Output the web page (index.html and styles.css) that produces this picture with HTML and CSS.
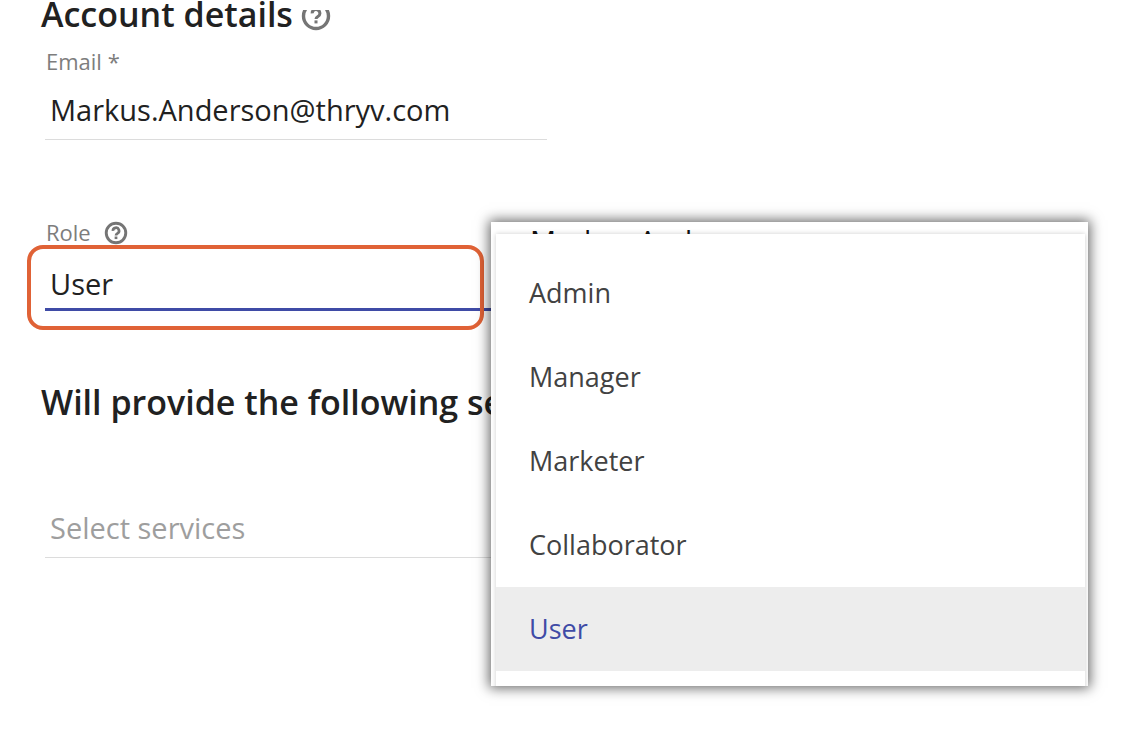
FILE: index.html
```html
<!DOCTYPE html>
<html lang="en">
<head>
    <meta charset="UTF-8">
    <meta name="viewport" content="width=device-width, initial-scale=1.0">
    <title>Account details</title>
    <link rel="stylesheet" href="styles.css">
</head>
<body>
    <main class="page">
        <form class="account-form">
            <h2 class="section-title">
                Account details
                <svg class="title-help" viewBox="0 9 30 21" aria-hidden="true">
                    <circle cx="15" cy="15" r="12.5" fill="none" stroke="currentColor" stroke-width="3.4" />
                    <path d="M11.2 12.4a3.8 3.8 0 1 1 5.7 3.1c-1.3.8-1.9 1.3-1.9 2.6" fill="none" stroke="currentColor" stroke-width="3" />
                    <rect x="13.5" y="19.4" width="3" height="3" fill="currentColor" />
                </svg>
            </h2>

            <div class="field">
                <label class="field-label" for="email">Email *</label>
                <input class="control" type="email" id="email" value="Markus.Anderson@thryv.com">
            </div>

            <div class="field field-role">
                <label class="field-label" for="role">
                    Role
                    <svg class="label-help" viewBox="0 0 30 30" aria-hidden="true">
                        <circle cx="15" cy="15" r="12.2" fill="none" stroke="currentColor" stroke-width="3.6" />
                        <path d="M11.2 12.4a3.8 3.8 0 1 1 5.7 3.1c-1.3.8-1.9 1.3-1.9 2.6" fill="none" stroke="currentColor" stroke-width="3.4" />
                        <rect x="13.3" y="19.4" width="3.4" height="3.2" fill="currentColor" />
                    </svg>
                </label>
                <select class="control" id="role">
                    <option>Admin</option>
                    <option>Manager</option>
                    <option>Marketer</option>
                    <option>Collaborator</option>
                    <option selected>User</option>
                </select>
                <div class="highlight"></div>
            </div>

            <h2 class="section-title section-services">Will provide the following services</h2>

            <select class="control control-empty" id="services" aria-label="Select services">
                <option>Select services</option>
            </select>
        </form>

        <!-- Open role list -->
        <div class="role-panel">
            <div class="panel-name">Markus Anderson</div>
            <div class="role-menu" role="listbox" aria-label="Role">
                <button type="button" class="role-option" role="option">Admin</button>
                <button type="button" class="role-option" role="option">Manager</button>
                <button type="button" class="role-option" role="option">Marketer</button>
                <button type="button" class="role-option" role="option">Collaborator</button>
                <button type="button" class="role-option selected" role="option" aria-selected="true">User</button>
            </div>
        </div>
    </main>
</body>
</html>
```

FILE: styles.css
```css
:root {
    --primary-color: #3f4ba6;
    --highlight-color: #e06236;
    --text-color: #212121;
    --label-color: #7d7d7d;
    --line-color: #dcdcdc;
}

* {
    box-sizing: border-box;
    margin: 0;
    padding: 0;
}

body {
    font-family: 'Open Sans', sans-serif;
    background: #fff;
    color: var(--text-color);
}

.page {
    position: relative;
    min-height: 100vh;
    padding: 0 45px;
}

.account-form {
    max-width: 502px;
}

.section-title {
    display: flex;
    align-items: flex-start;
    gap: 8px;
    height: 28px;
    margin-left: -4px;
    font-size: 34px;
    font-weight: 600;
    line-height: 28px;
    white-space: nowrap;
}

.section-services {
    margin-top: 77px;
    margin-bottom: 78px;
}

.title-help {
    width: 30px;
    height: 21px;
    margin-top: 10px;
    color: #757575;
}

.field {
    position: relative;
    margin-top: 18px;
}

.field-role {
    margin-top: 77px;
}

.field-label {
    display: flex;
    align-items: center;
    gap: 13px;
    padding-left: 1px;
    color: var(--label-color);
    font-size: 22px;
    line-height: 30px;
}

.label-help {
    width: 24px;
    height: 24px;
    margin-top: 2px;
    color: #757575;
}

.control {
    display: block;
    width: 100%;
    height: 64px;
    padding: 4px 5px 0;
    border: none;
    border-bottom: 1px solid var(--line-color);
    border-radius: 0;
    outline: none;
    appearance: none;
    background: transparent;
    color: var(--text-color);
    font-family: inherit;
    font-size: 29px;
}

.control-empty {
    color: #9e9e9e;
}

.field-role .control {
    padding-top: 12px;
    border-bottom: 3px solid var(--primary-color);
}

/* Marks the field to change */
.highlight {
    position: absolute;
    top: 28px;
    left: -18px;
    right: 63px;
    height: 85px;
    border: 4px solid var(--highlight-color);
    border-radius: 16px;
    pointer-events: none;
}

.role-panel {
    position: absolute;
    top: 222px;
    left: 491px;
    right: 52px;
    height: 464px;
    padding: 0 3px 0 5px;
    overflow: hidden;
    background: #fff;
    box-shadow: 0 0 12px 2px rgba(0, 0, 0, 0.6);
}

.panel-name {
    height: 12px;
    padding-left: 34px;
    color: #111;
    font-size: 29px;
    line-height: 38px;
}

.role-menu {
    position: relative;
    min-height: 100%;
    padding: 17px 0;
    background: #fff;
    box-shadow: 0 0 5px rgba(0, 0, 0, 0.2);
}

.role-option {
    display: block;
    width: 100%;
    height: 84px;
    padding: 0 33px 2px;
    border: none;
    background: none;
    color: #424242;
    font-family: inherit;
    font-size: 27px;
    text-align: left;
    cursor: pointer;
}

.role-option.selected {
    background: #ededed;
    color: var(--primary-color);
}
```
